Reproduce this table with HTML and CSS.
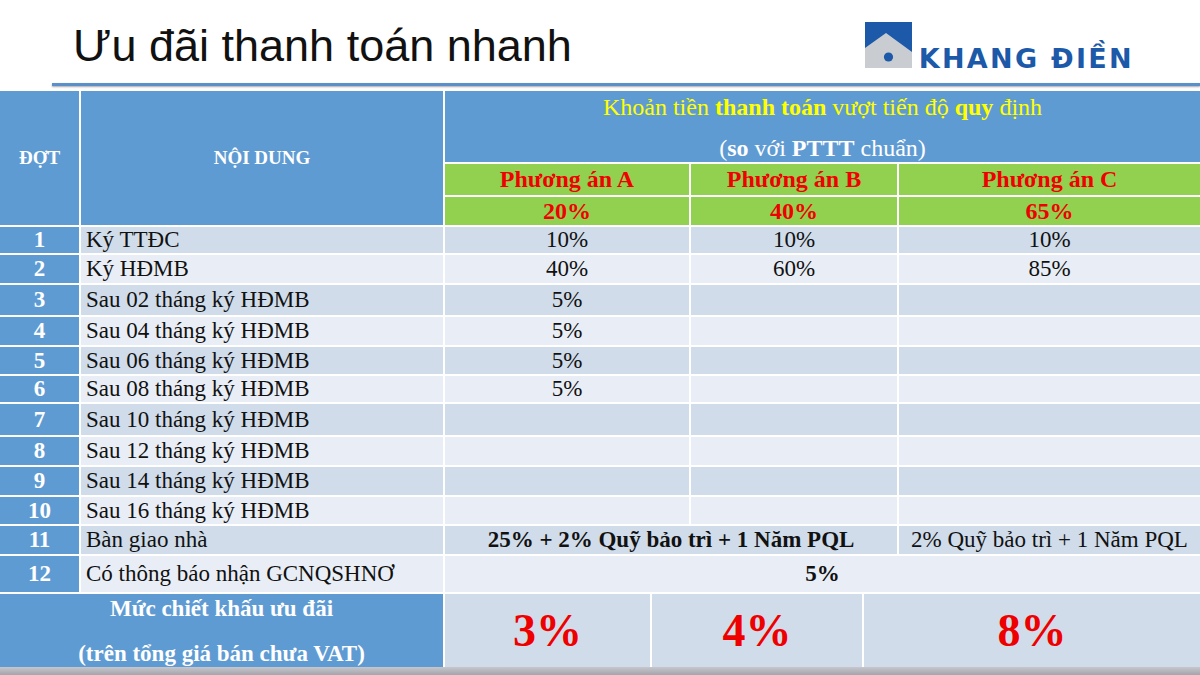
FILE: index.html
```html
<!DOCTYPE html>
<html lang="vi">
<head>
<meta charset="utf-8">
<title>Ưu đãi thanh toán nhanh</title>
<link rel="stylesheet" href="styles.css">
</head>
<body>
<div class="slide">
  <header class="top">
    <h1 class="title">Ưu đãi thanh toán nhanh</h1>
    <div class="logo">
      <svg class="logo-icon" width="47" height="46" viewBox="0 0 47 46" aria-hidden="true">
        <rect x="0" y="0" width="47" height="46" fill="#1d59a9"/>
        <polygon points="0,26 21,11 47,30 47,46 0,46" fill="#c9ccd0"/>
        <circle cx="23.5" cy="35" r="4.6" fill="#1d59a9"/>
      </svg>
      <span class="logo-text">KHANG ĐIỀN</span>
    </div>
  </header>
  <div class="rule"></div>

  <div class="table">
    <!-- header -->
    <div class="cell blue hd c1 r1-3">ĐỢT</div>
    <div class="cell blue hd c2 r1-3">NỘI DUNG</div>
    <div class="cell blue top-head c3-7">
      <div class="yl">Khoản tiền <b>thanh toán</b> vượt tiến độ <b>quy</b> định</div>
      <div class="wl">(<b>so</b> với <b>PTTT</b> chuẩn)</div>
    </div>
    <div class="cell green red-b c3-4">Phương án A</div>
    <div class="cell green red-b c5-6">Phương án B</div>
    <div class="cell green red-b c7">Phương án C</div>
    <div class="cell green red-b c3-4">20%</div>
    <div class="cell green red-b c5-6">40%</div>
    <div class="cell green red-b c7">65%</div>

    <!-- rows -->
    <div class="cell blue num">1</div>
    <div class="cell dark txt">Ký TTĐC</div>
    <div class="cell dark val c3-4">10%</div>
    <div class="cell dark val c5-6">10%</div>
    <div class="cell dark val c7">10%</div>

    <div class="cell blue num">2</div>
    <div class="cell light txt">Ký HĐMB</div>
    <div class="cell light val c3-4">40%</div>
    <div class="cell light val c5-6">60%</div>
    <div class="cell light val c7">85%</div>

    <div class="cell blue num">3</div>
    <div class="cell dark txt">Sau 02 tháng ký HĐMB</div>
    <div class="cell dark val c3-4">5%</div>
    <div class="cell dark val c5-6"></div>
    <div class="cell dark val c7"></div>

    <div class="cell blue num">4</div>
    <div class="cell light txt">Sau 04 tháng ký HĐMB</div>
    <div class="cell light val c3-4">5%</div>
    <div class="cell light val c5-6"></div>
    <div class="cell light val c7"></div>

    <div class="cell blue num">5</div>
    <div class="cell dark txt">Sau 06 tháng ký HĐMB</div>
    <div class="cell dark val c3-4">5%</div>
    <div class="cell dark val c5-6"></div>
    <div class="cell dark val c7"></div>

    <div class="cell blue num">6</div>
    <div class="cell light txt">Sau 08 tháng ký HĐMB</div>
    <div class="cell light val c3-4">5%</div>
    <div class="cell light val c5-6"></div>
    <div class="cell light val c7"></div>

    <div class="cell blue num">7</div>
    <div class="cell dark txt">Sau 10 tháng ký HĐMB</div>
    <div class="cell dark val c3-4"></div>
    <div class="cell dark val c5-6"></div>
    <div class="cell dark val c7"></div>

    <div class="cell blue num">8</div>
    <div class="cell light txt">Sau 12 tháng ký HĐMB</div>
    <div class="cell light val c3-4"></div>
    <div class="cell light val c5-6"></div>
    <div class="cell light val c7"></div>

    <div class="cell blue num">9</div>
    <div class="cell dark txt">Sau 14 tháng ký HĐMB</div>
    <div class="cell dark val c3-4"></div>
    <div class="cell dark val c5-6"></div>
    <div class="cell dark val c7"></div>

    <div class="cell blue num">10</div>
    <div class="cell light txt">Sau 16 tháng ký HĐMB</div>
    <div class="cell light val c3-4"></div>
    <div class="cell light val c5-6"></div>
    <div class="cell light val c7"></div>

    <div class="cell blue num">11</div>
    <div class="cell dark txt">Bàn giao nhà</div>
    <div class="cell dark val bold c3-6">25% + 2% Quỹ bảo trì + 1 Năm PQL</div>
    <div class="cell dark val c7">2% Quỹ bảo trì + 1 Năm PQL</div>

    <div class="cell blue num">12</div>
    <div class="cell light txt">Có thông báo nhận GCNQSHNƠ</div>
    <div class="cell light val bold c3-7">5%</div>

    <!-- footer -->
    <div class="cell blue foot-label c1-2">
      <div>Mức chiết khấu ưu đãi</div>
      <div>(trên tổng giá bán chưa VAT)</div>
    </div>
    <div class="cell dark big c3">3%</div>
    <div class="cell dark big c4-5">4%</div>
    <div class="cell dark big c6-7">8%</div>
  </div>
  <div class="band"></div>
</div>
</body>
</html>
```

FILE: styles.css
```css
html, body {
  margin: 0;
  padding: 0;
  background: #ffffff;
}

.slide {
  width: 1200px;
  height: 675px;
  overflow: hidden;
  background: #ffffff;
}

.top {
  height: 83px;
  display: flex;
  justify-content: space-between;
  align-items: flex-start;
}

.title {
  margin: 0;
  padding: 23px 0 0 73px;
  font-family: "Liberation Sans", Arial, sans-serif;
  font-weight: normal;
  font-size: 45px;
  line-height: 1;
  color: #111111;
}

.logo {
  margin: 22px 66px 0 0;
  display: flex;
  align-items: flex-end;
  gap: 7px;
}

.logo-icon {
  display: block;
}

.logo-text {
  display: block;
  font-family: "DejaVu Sans", "Liberation Sans", sans-serif;
  font-weight: bold;
  font-size: 27px;
  line-height: 28px;
  letter-spacing: 2.3px;
  color: #1d59a9;
  margin-bottom: -5px;
}

.rule {
  margin-left: 52px;
  height: 3px;
  background: #5a8fc9;
  box-shadow: 0 1px 2px rgba(60, 60, 80, 0.45);
  margin-bottom: 5px;
}

.table {
  display: grid;
  grid-template-columns: 79px 362px 205px 37px 171px 33px 301px;
  grid-template-rows: 71px 31px 28px 26px 28px 30px 28px 27px 26px 31px 28px 28px 27px 28px 36px 73px;
  gap: 2px;
  background: #ffffff;
  font-family: "Liberation Serif", "Times New Roman", serif;
  color: #111111;
}

.cell {
  display: flex;
  align-items: center;
  justify-content: center;
  white-space: nowrap;
  overflow: visible;
}

.blue { background: #5f9bd3; color: #ffffff; }
.green { background: #92d050; }
.dark { background: #d0dcea; }
.light { background: #e9eef6; }

.c1 { grid-column: 1; }
.c2 { grid-column: 2; }
.c3 { grid-column: 3; }
.c7 { grid-column: 7; }
.c1-2 { grid-column: 1 / 3; }
.c3-4 { grid-column: 3 / 5; }
.c4-5 { grid-column: 4 / 6; }
.c5-6 { grid-column: 5 / 7; }
.c6-7 { grid-column: 6 / 8; }
.c3-6 { grid-column: 3 / 7; }
.c3-7 { grid-column: 3 / 8; }
.r1-3 { grid-row: 1 / 4; }

.hd {
  font-weight: bold;
  font-size: 19px;
}

.top-head {
  flex-direction: column;
  justify-content: space-between;
  padding-top: 3px;
  box-sizing: border-box;
  line-height: 27px;
  font-size: 24px;
}

.top-head .yl { color: #ffff00; }
.top-head .wl { color: #ffffff; }

.red-b {
  color: #f00000;
  font-weight: bold;
  font-size: 24px;
}

.num {
  grid-column: 1;
  font-weight: bold;
  font-size: 23px;
}

.txt {
  grid-column: 2;
  justify-content: flex-start;
  padding-left: 5px;
  font-size: 23px;
}

.val {
  font-size: 23px;
}

.bold { font-weight: bold; }

.foot-label {
  flex-direction: column;
  justify-content: flex-start;
  gap: 17px;
  padding-top: 1px;
  line-height: 28px;
  font-weight: bold;
  font-size: 23px;
}

.big {
  color: #ee0000;
  font-weight: bold;
  font-size: 46px;
}

.band {
  height: 8px;
  background: linear-gradient(#c6c6cc, #a4a4ac);
}
```
